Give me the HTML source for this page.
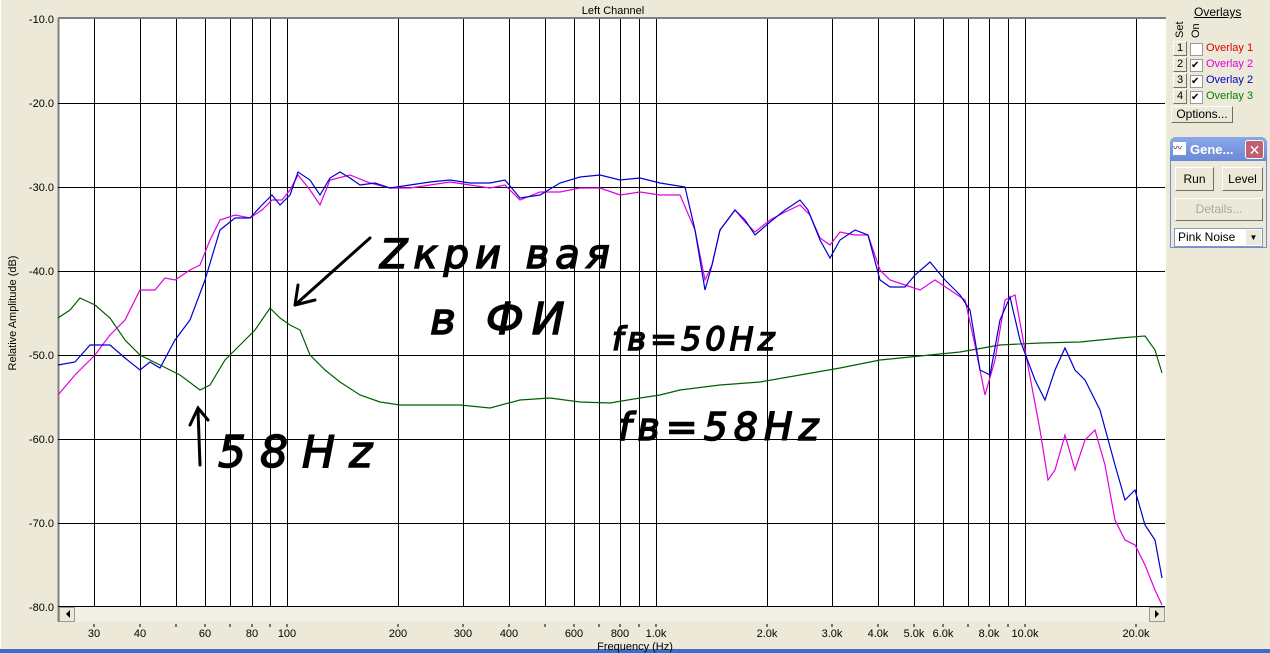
<!DOCTYPE html>
<html><head><meta charset="utf-8"><style>
body{margin:0;width:1270px;height:653px;overflow:hidden;background:#ece9d8;font-family:"Liberation Sans",sans-serif;position:relative}
.a{position:absolute}
.btn{position:absolute;background:#ece9d8;border:1px solid;border-color:#fff #716f64 #716f64 #fff;font-size:12px;text-align:center;box-sizing:border-box}
</style></head><body>
<svg class="a" style="left:0;top:0" width="1270" height="653" font-family="Liberation Sans, sans-serif">
<rect x="0" y="0" width="1270" height="650" fill="#ece9d8"/>
<rect x="0" y="0" width="1" height="650" fill="#fff"/>
<rect x="0" y="649" width="1270" height="4" fill="#3a6ec8"/>
<text x="613" y="14" font-size="11" text-anchor="middle">Left Channel</text>
<rect x="58" y="18" width="1108" height="589" fill="#fff"/>
<line x1="58" y1="18" x2="1166" y2="18" stroke="#808080" stroke-width="2"/>
<line x1="58.5" y1="18" x2="58.5" y2="622" stroke="#808080" stroke-width="2"/>
<g stroke="#000" stroke-width="1">
<line x1="58" y1="103.5" x2="1165" y2="103.5"/><line x1="58" y1="187.5" x2="1165" y2="187.5"/>
<line x1="58" y1="271.5" x2="1165" y2="271.5"/><line x1="58" y1="355.5" x2="1165" y2="355.5"/>
<line x1="58" y1="439.5" x2="1165" y2="439.5"/><line x1="58" y1="523.5" x2="1165" y2="523.5"/>
<line x1="58" y1="606.5" x2="1165" y2="606.5"/>
<g>
<line x1="94.5" y1="19" x2="94.5" y2="606"/><line x1="140.5" y1="19" x2="140.5" y2="606"/><line x1="176.5" y1="19" x2="176.5" y2="606"/>
<line x1="205.5" y1="19" x2="205.5" y2="606"/><line x1="230.5" y1="19" x2="230.5" y2="606"/><line x1="252.5" y1="19" x2="252.5" y2="606"/>
<line x1="270.5" y1="19" x2="270.5" y2="606"/><line x1="287.5" y1="19" x2="287.5" y2="606"/><line x1="398.5" y1="19" x2="398.5" y2="606"/>
<line x1="463.5" y1="19" x2="463.5" y2="606"/><line x1="509.5" y1="19" x2="509.5" y2="606"/><line x1="545.5" y1="19" x2="545.5" y2="606"/>
<line x1="574.5" y1="19" x2="574.5" y2="606"/><line x1="599.5" y1="19" x2="599.5" y2="606"/><line x1="620.5" y1="19" x2="620.5" y2="606"/>
<line x1="639.5" y1="19" x2="639.5" y2="606"/><line x1="656.5" y1="19" x2="656.5" y2="606"/><line x1="767.5" y1="19" x2="767.5" y2="606"/>
<line x1="832.5" y1="19" x2="832.5" y2="606"/><line x1="878.5" y1="19" x2="878.5" y2="606"/><line x1="914.5" y1="19" x2="914.5" y2="606"/>
<line x1="943.5" y1="19" x2="943.5" y2="606"/><line x1="968.5" y1="19" x2="968.5" y2="606"/><line x1="989.5" y1="19" x2="989.5" y2="606"/>
<line x1="1008.5" y1="19" x2="1008.5" y2="606"/><line x1="1025.5" y1="19" x2="1025.5" y2="606"/><line x1="1136.5" y1="19" x2="1136.5" y2="606"/>
</g></g>
<g font-size="11" text-anchor="end">
<text x="54" y="23">-10.0</text><text x="54" y="107">-20.0</text><text x="54" y="191">-30.0</text><text x="54" y="275">-40.0</text>
<text x="54" y="359">-50.0</text><text x="54" y="443">-60.0</text><text x="54" y="527">-70.0</text><text x="54" y="611">-80.0</text>
</g>
<text transform="translate(16,313) rotate(-90)" font-size="11" text-anchor="middle">Relative Amplitude (dB)</text>
<g font-size="11" text-anchor="middle">
<text x="94" y="637">30</text><text x="140" y="637">40</text><text x="205" y="637">60</text><text x="252" y="637">80</text><text x="287" y="637">100</text>
<text x="398" y="637">200</text><text x="463" y="637">300</text><text x="509" y="637">400</text><text x="574" y="637">600</text><text x="620" y="637">800</text>
<text x="656" y="637">1.0k</text><text x="767" y="637">2.0k</text><text x="832" y="637">3.0k</text><text x="878" y="637">4.0k</text><text x="914" y="637">5.0k</text>
<text x="943" y="637">6.0k</text><text x="989" y="637">8.0k</text><text x="1025" y="637">10.0k</text><text x="1136" y="637">20.0k</text>
<text x="635" y="650">Frequency (Hz)</text>
</g>
<g stroke="#000"><path d="M94 624v3M140 624v3M176 624v3M205 624v3M230 624v3M252 624v3M270 624v3M287 624v3M398 624v3M463 624v3M509 624v3M545 624v3M574 624v3M599 624v3M620 624v3M639 624v3M656 624v3M767 624v3M832 624v3M878 624v3M914 624v3M943 624v3M968 624v3M989 624v3M1008 624v3M1025 624v3M1136 624v3"/></g>
<rect x="59" y="607" width="1107" height="15" fill="#f2f0e6"/>
<rect x="59.5" y="607.5" width="15" height="14" fill="#ece9d8" stroke="#999"/>
<path d="M70 610l-4 4 4 4z" fill="#000"/>
<rect x="1149.5" y="607.5" width="15" height="14" fill="#ece9d8" stroke="#999"/>
<path d="M1155 610l4 4-4 4z" fill="#000"/>
<g fill="none" stroke-width="1.2">
<polyline stroke="#006000" points="58,318 70,310 80,298 95,305 110,318 125,340 140,355 160,365 180,375 200,390 210,385 225,360 240,345 255,330 270,308 280,318 290,325 300,330 310,355 325,370 340,382 360,395 380,402 400,405 430,405 460,405 490,408 520,400 550,398 580,402 610,403 640,398 660,395 680,390 720,385 760,382 800,375 840,368 880,360 920,356 960,352 1000,345 1040,343 1080,342 1120,338 1145,336 1155,350 1162,373"/>
<polyline stroke="#e000e0" points="58,395 75,375 95,355 110,335 125,320 140,290 155,290 165,278 175,280 190,270 200,265 210,240 220,220 235,215 250,218 262,210 272,200 282,200 290,190 298,175 310,190 320,205 330,180 350,175 370,183 390,188 410,188 430,185 450,182 470,185 490,188 505,185 520,200 540,192 560,192 580,188 600,188 620,195 640,192 660,195 680,195 695,230 705,280 712,265 720,230 735,210 745,222 755,232 770,220 785,212 800,205 810,215 820,238 830,245 840,232 855,235 868,235 880,270 890,280 905,285 920,290 935,280 950,290 965,300 975,345 985,395 995,360 1005,300 1015,295 1025,350 1040,430 1048,480 1055,470 1065,435 1075,470 1085,440 1095,430 1105,465 1115,520 1125,540 1135,545 1145,565 1155,590 1162,605"/>
<polyline stroke="#0000d0" points="58,365 75,362 90,345 110,345 125,358 140,370 150,362 160,368 175,340 190,320 205,280 220,230 235,218 250,218 262,205 272,195 280,205 290,195 298,172 310,180 320,195 330,178 340,172 350,178 360,185 375,183 390,188 410,185 430,182 450,180 470,183 490,183 505,180 520,198 540,195 560,183 580,177 600,175 620,180 640,178 660,183 685,187 695,230 705,290 712,265 720,230 735,210 745,220 755,235 770,222 785,210 800,200 808,210 820,240 830,258 840,240 855,230 868,235 880,280 890,287 905,287 915,275 930,262 945,280 960,295 970,310 980,370 990,375 1000,320 1010,297 1020,340 1035,380 1045,400 1055,370 1065,348 1075,370 1085,380 1100,410 1115,465 1125,500 1135,490 1145,525 1155,540 1162,578"/>
</g>
<g fill="#000" stroke="#000" stroke-width="1.5" font-family="DejaVu Sans, sans-serif" font-style="italic">
<text x="380" y="268" font-size="40" letter-spacing="6">Zкри вая</text>
<text x="430" y="334" font-size="44" letter-spacing="8">в ФИ</text>
<text x="612" y="350" font-size="32" letter-spacing="4">fв=50Hz</text>
<text x="618" y="440" font-size="38" letter-spacing="6">fв=58Hz</text>
<text x="218" y="467" font-size="44" letter-spacing="14">58Hz</text>
</g>
<g fill="none" stroke="#000" stroke-width="3" stroke-linecap="round">
<path d="M370 238 L295 305 M295 305 L298 285 M295 305 L315 300"/>
<path d="M200 465 L198 410 M190 425 L198 408 L208 420"/>
</g>
</svg>
<div class="a" style="left:1194px;top:5px;font-size:12px;text-decoration:underline">Overlays</div>
<div class="a" style="left:1174px;top:38px;font-size:11px;transform:rotate(-90deg);transform-origin:0 0">Set</div>
<div class="a" style="left:1190px;top:38px;font-size:11px;transform:rotate(-90deg);transform-origin:0 0">On</div>
<div class="btn" style="left:1173px;top:41px;width:14px;height:15px;font-size:11px">1</div>
<div class="btn" style="left:1173px;top:57px;width:14px;height:15px;font-size:11px">2</div>
<div class="btn" style="left:1173px;top:73px;width:14px;height:15px;font-size:11px">3</div>
<div class="btn" style="left:1173px;top:89px;width:14px;height:15px;font-size:11px">4</div>
<div class="a" style="left:1190px;top:43px;width:11px;height:11px;background:#fff;border:1px solid #999"></div>
<div class="a" style="left:1190px;top:59px;width:11px;height:11px;background:#fff;border:1px solid #999;font-size:10px;line-height:11px">✔</div>
<div class="a" style="left:1190px;top:75px;width:11px;height:11px;background:#fff;border:1px solid #999;font-size:10px;line-height:11px">✔</div>
<div class="a" style="left:1190px;top:91px;width:11px;height:11px;background:#fff;border:1px solid #999;font-size:10px;line-height:11px">✔</div>
<div class="a" style="left:1206px;top:42px;font-size:11px;color:#e00000">Overlay 1</div>
<div class="a" style="left:1206px;top:58px;font-size:11px;color:#e000e0">Overlay 2</div>
<div class="a" style="left:1206px;top:74px;font-size:11px;color:#0000c0">Overlay 2</div>
<div class="a" style="left:1206px;top:90px;font-size:11px;color:#008000">Overlay 3</div>
<div class="btn" style="left:1171px;top:106px;width:62px;height:17px;line-height:15px">Options...</div>
<div class="a" style="left:1170px;top:137px;width:97px;height:111px;background:#ece9d8;border-radius:6px 6px 0 0;border:1px solid #6f8fd8;box-sizing:border-box"></div>
<div class="a" style="left:1170px;top:137px;width:97px;height:24px;background:linear-gradient(#8aa8e8,#6a8ad8);border-radius:6px 6px 0 0"></div>
<div class="a" style="left:1173px;top:142px;width:13px;height:13px;background:#fff;font-size:9px;line-height:13px">〰</div>
<div class="a" style="left:1190px;top:142px;color:#fff;font-weight:bold;font-size:13px">Gene...</div>
<div class="a" style="left:1245px;top:140px;width:19px;height:19px;background:#c06070;border:1px solid #fff;border-radius:3px;color:#fff;font-size:14px;text-align:center;line-height:19px;box-sizing:border-box">✕</div>
<div class="btn" style="left:1175px;top:167px;width:39px;height:24px;line-height:22px">Run</div>
<div class="btn" style="left:1222px;top:167px;width:41px;height:24px;line-height:22px">Level</div>
<div class="btn" style="left:1175px;top:198px;width:88px;height:23px;line-height:21px;color:#aca899">Details...</div>
<div class="a" style="left:1174px;top:228px;width:89px;height:19px;background:#fff;border:1px solid #7f9db9;box-sizing:border-box;font-size:12px;line-height:17px;padding-left:3px">Pink Noise<span style="position:absolute;right:1px;top:1px;width:15px;height:15px;background:#ece9d8;font-size:8px;text-align:center;line-height:15px">▼</span></div>
</body></html>
